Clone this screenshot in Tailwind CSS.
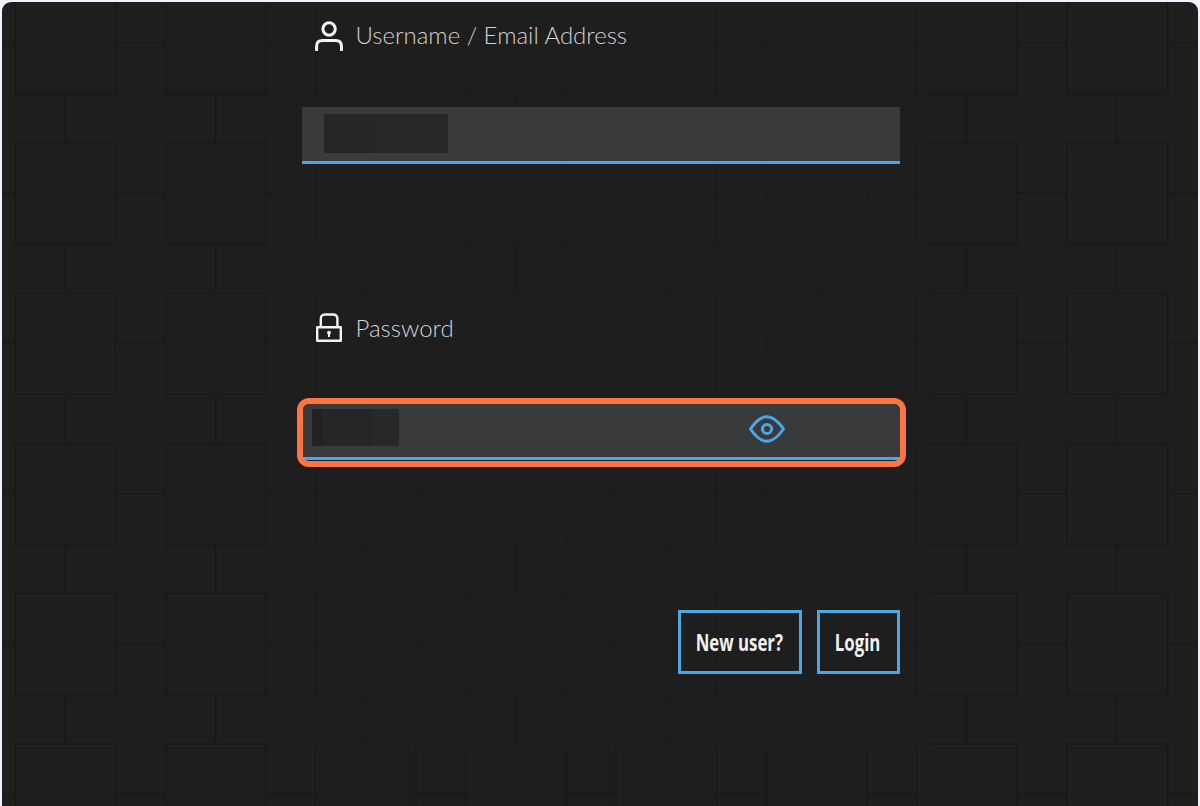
<!DOCTYPE html>
<html lang="en">
<head>
<meta charset="utf-8">
<title>Login</title>
<script src="https://cdn.jsdelivr.net/npm/@tailwindcss/browser@4"></script>
</head>
<body class="h-[806px] overflow-hidden bg-[#f0f2fc] px-0.5 pt-0.5">
<main class="relative flex h-[804px] justify-center overflow-hidden rounded-t-[9px] bg-[#1e1e1e]">
  <!-- Tiled circuit pattern -->
  <svg class="absolute inset-0 h-full w-full" aria-hidden="true">
    <defs>
      <pattern id="tiles" x="12.2" y="-10" width="150.25" height="150.2" patternUnits="userSpaceOnUse">
        <g fill="none" stroke="#191919" stroke-width="2">
          <rect x="1" y="1" width="100.5" height="101"/>
          <path d="M102 51H150.3M51 102V150.3"/>
        </g>
      </pattern>
    </defs>
    <rect width="1196" height="804" fill="url(#tiles)"/>
  </svg>
  <form class="relative h-[746px] w-[657px] bg-[#1e1e1e]/90 pr-[29px] pl-[30px] pt-3 font-['Lato'] text-[#d2d2d2]">
    <label for="user" class="flex h-[42px] items-center pl-[11px]">
      <svg class="h-8 w-8" viewBox="0 0 32 32" fill="none" stroke="#f2f2f2" stroke-width="3" stroke-linecap="round"><circle cx="16.1" cy="10" r="6.2"/><path d="M3.6 31V27.5Q3.6 21.6 9.5 21.6H22.5Q28.5 21.6 28.5 27.5V31"/></svg>
      <span class="ml-[11px] origin-left whitespace-nowrap text-2xl font-light">Username / Email Address</span>
    </label>
    <div id="user" class="mt-[51px] h-[57px] border-b-[3px] border-[#4ba6e3] bg-[#393a3c] pt-[7px] pl-[22px]">
      <div class="flex h-[39px] w-[124px] bg-[#282828]"><div class="w-[49px] bg-[#262626]"></div></div>
    </div>
    <label for="pass" class="mt-[143px] flex h-[42px] items-center pl-[11px]">
      <svg class="h-8 w-8" viewBox="0 0 32 32" fill="none" stroke="#f2f2f2" stroke-width="2.4" stroke-linejoin="round"><rect x="4.2" y="15.2" width="23.6" height="13.6"/><path d="M7.8 15V7Q7.8 2.5 12 2.5H20Q24.4 2.5 24.4 7V15"/><circle cx="16" cy="20.7" r="1.9" fill="#f2f2f2" stroke="none"/><path d="M16 21V25" stroke-width="2"/></svg>
      <span class="ml-[11px] origin-left whitespace-nowrap text-2xl font-light">Password</span>
    </label>
    <div id="pass" class="-ml-[5px] mt-[49px] h-[69px] w-[609px] rounded-[12px] border-6 border-[#ff7541] bg-[#1e1e1e]">
      <div class="flex h-[56px] justify-between rounded-t-[6px] border-b-[3px] border-[#4ba6e3] bg-[#393a3c] pt-[5px] pr-[114px] pl-[9px]">
        <div class="flex h-[37px] w-[87px] bg-[#262626]"><div class="w-[10px] bg-[#222222]"></div><div class="ml-auto w-[26px] bg-[#28292b]"></div></div>
        <svg class="mt-[6px] h-[28px] w-[38px]" viewBox="0 0 38 28" fill="none" stroke="#4ba6e3" stroke-width="3" stroke-linejoin="round"><path d="M2.5 14Q18.9-10.5 35.5 14Q18.9 38.5 2.5 14Z"/><circle cx="19" cy="14" r="4.6"/></svg>
      </div>
    </div>
    <div class="mt-[143px] flex justify-end gap-[15px] font-['Open_Sans'] text-2xl font-bold text-[#f2f2f2]">
      <button type="button" class="flex h-[64px] w-[124px] items-center justify-center border-3 border-[#4ba6e3]"><span class="scale-x-[.7] whitespace-nowrap">New user?</span></button>
      <button type="button" class="flex h-[64px] w-[83px] items-center justify-center border-3 border-[#4ba6e3]"><span class="scale-x-[.7] whitespace-nowrap">Login</span></button>
    </div>
  </form>
</main>
</body>
</html>
